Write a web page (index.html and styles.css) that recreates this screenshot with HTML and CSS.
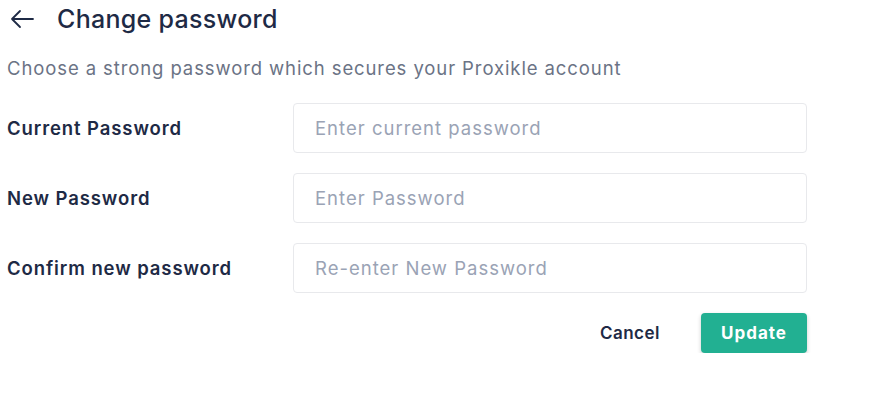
FILE: index.html
```html
<!DOCTYPE html>
<html lang="en">
<head>
<meta charset="utf-8">
<title>Change password</title>
<link rel="stylesheet" href="styles.css">
</head>
<body>
<div class="page">
  <header class="head">
    <button class="back" aria-label="Back">
      <svg width="24" height="20" viewBox="0 0 24 20" fill="none" stroke="#1e2a45" stroke-width="1.8" stroke-linecap="round" stroke-linejoin="round"><path d="M23 10H2M10 2L2 10L10 18"/></svg>
    </button>
    <h1 class="title">Change password</h1>
  </header>
  <p class="sub">Choose a strong password which secures your Proxikle account</p>
  <form class="form">
    <div class="row">
      <label class="label">Current Password</label>
      <input class="input" type="password" placeholder="Enter current password">
    </div>
    <div class="row">
      <label class="label">New Password</label>
      <input class="input" type="password" placeholder="Enter Password">
    </div>
    <div class="row">
      <label class="label">Confirm new password</label>
      <input class="input" type="password" placeholder="Re-enter New Password">
    </div>
    <div class="actions">
      <button type="button" class="cancel">Cancel</button>
      <button type="button" class="update">Update</button>
    </div>
  </form>
</div>
</body>
</html>
```
FILE: styles.css
```css
* { box-sizing: border-box; }
body {
  margin: 0;
  background: #fff;
  font-family: "Inter", "Open Sans", sans-serif;
  color: #1e2a45;
}
.page {
  width: 807px;
  padding: 0 0 0 7px;
}
.head {
  display: flex;
  align-items: center;
  height: 38px;
  gap: 23px;
}
.back {
  border: 0;
  background: none;
  padding: 0;
  margin-left: 3px;
  display: flex;
  align-items: center;
}
.title {
  margin: 0;
  font-size: 25px;
  font-weight: 500;
  letter-spacing: 0.3px;
}
.sub {
  margin: 18px 0 0;
  font-size: 18.5px;
  line-height: 24px;
  letter-spacing: 0.9px;
  color: #6b7385;
}
.form {
  margin-top: 23px;
  display: flex;
  flex-direction: column;
  gap: 20px;
}
.row {
  display: flex;
  align-items: center;
}
.label {
  width: 286px;
  font-size: 18.5px;
  font-weight: 600;
  letter-spacing: 0.9px;
}
.input {
  flex: 1;
  height: 50px;
  border: 1px solid #e8e9ec;
  border-radius: 4px;
  padding: 0 21px;
  font-family: inherit;
  font-size: 18.5px;
  letter-spacing: 1px;
  outline: none;
}
.input::placeholder { color: #9aa3b5; }
.actions {
  display: flex;
  justify-content: flex-end;
  align-items: center;
  gap: 41px;
}
.cancel {
  border: 0;
  background: none;
  font-family: inherit;
  font-size: 17px;
  font-weight: 600;
  letter-spacing: 0.5px;
  color: #1e2a45;
  padding: 0;
}
.update {
  width: 106px;
  height: 40px;
  border: 0;
  border-radius: 4px;
  background: #22b092;
  color: #fff;
  font-family: inherit;
  font-size: 17px;
  font-weight: 700;
  letter-spacing: 1px;
  box-shadow: 0 2px 4px rgba(0,0,0,0.2);
}
```
